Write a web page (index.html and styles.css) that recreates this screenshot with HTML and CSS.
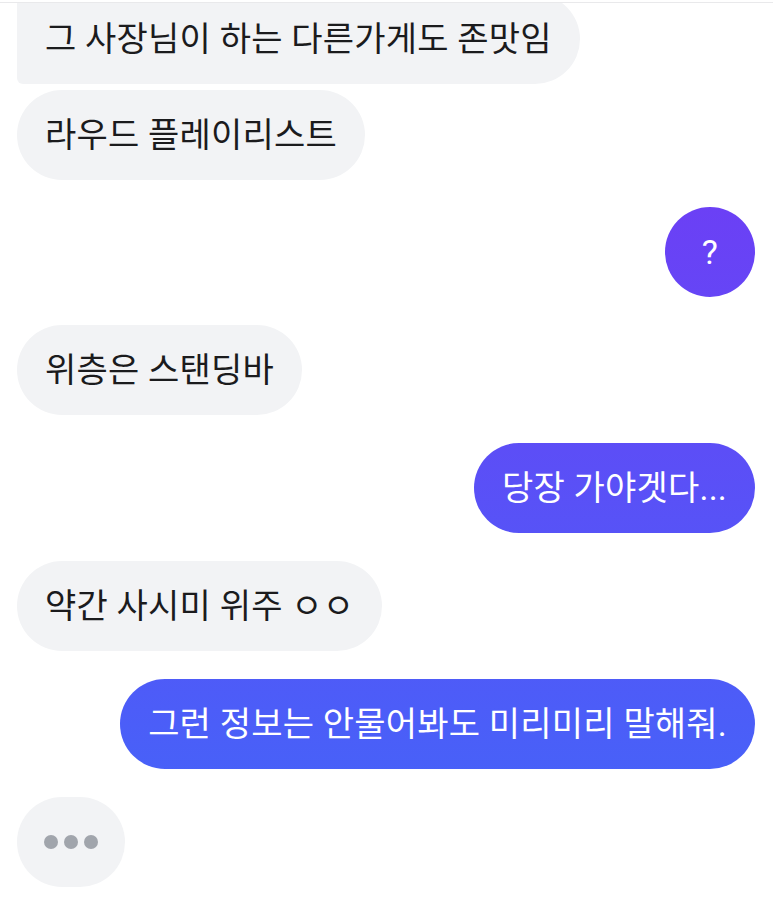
FILE: index.html
```html
<!DOCTYPE html>
<html lang="ko">
<head>
  <meta charset="UTF-8">
  <meta name="viewport" content="width=device-width, initial-scale=1.0">
  <title>채팅</title>
  <link rel="stylesheet" href="styles.css">
</head>
<body>
  <div class="topbar"></div>
  <div class="chat">
    <div class="row row--them row--first">
      <p class="bubble bubble--them bubble--tail">그 사장님이 하는 다른가게도 존맛임</p>
    </div>
    <div class="row row--them row--cont">
      <p class="bubble bubble--them">라우드 플레이리스트</p>
    </div>
    <div class="row row--me row--tight">
      <p class="bubble bubble--me bubble--round">?</p>
    </div>
    <div class="row row--them">
      <p class="bubble bubble--them">위층은 스탠딩바</p>
    </div>
    <div class="row row--me">
      <p class="bubble bubble--me">당장 가야겟다...</p>
    </div>
    <div class="row row--them">
      <p class="bubble bubble--them">약간 사시미 위주 ㅇㅇ</p>
    </div>
    <div class="row row--me">
      <p class="bubble bubble--me">그런 정보는 안물어봐도 미리미리 말해줘.</p>
    </div>
    <div class="row row--them">
      <div class="bubble bubble--them typing">
        <span class="dot"></span>
        <span class="dot"></span>
        <span class="dot"></span>
      </div>
    </div>
  </div>
</body>
</html>
```

FILE: styles.css
```css
body {
  margin: 0;
  background-color: #fff;
  font-family: Roboto, "Noto Sans CJK KR", sans-serif;
  height: 100vh;
  display: flex;
  flex-direction: column;
  overflow: hidden;
}

.topbar {
  height: 2px;
  border-bottom: 1px solid #e9e9eb;
  flex-shrink: 0;
  position: relative;
  z-index: 1;
  background-color: #fff;
}

.chat {
  flex: 1;
  overflow: hidden;
  display: flex;
  flex-direction: column;
  padding: 0 18px 0 17px;
}

.row {
  display: flex;
  margin-top: 28px;
}

.row--first {
  margin-top: -9px;
}

.row--cont {
  margin-top: 6px;
}

.row--tight {
  margin-top: 27px;
}

.row--me {
  justify-content: flex-end;
}

.bubble {
  margin: 0;
  padding: 23px 28px;
  font-size: 34px;
  line-height: 44px;
  letter-spacing: 0.2px;
  border-radius: 45px;
  white-space: nowrap;
}

.bubble--them {
  background-color: #f2f3f5;
  color: #1b1b1d;
}

.bubble--tail {
  border-bottom-left-radius: 6px;
  border-top-left-radius: 6px;
}

/* the gradient is pinned to the window, so bubbles shift from purple to blue */
.bubble--me {
  color: #fff;
  background-image: linear-gradient(to bottom, #7834f4, #4068f9);
  background-attachment: fixed;
}

.bubble--round {
  width: 90px;
  height: 90px;
  padding: 0;
  box-sizing: border-box;
  display: flex;
  justify-content: center;
  align-items: center;
  font-size: 34px;
}

.typing {
  width: 108px;
  height: 90px;
  padding: 0;
  box-sizing: border-box;
  display: flex;
  justify-content: center;
  align-items: center;
  gap: 6px;
}

.dot {
  width: 14px;
  height: 14px;
  border-radius: 50%;
  background-color: #a1a5ac;
}
```
